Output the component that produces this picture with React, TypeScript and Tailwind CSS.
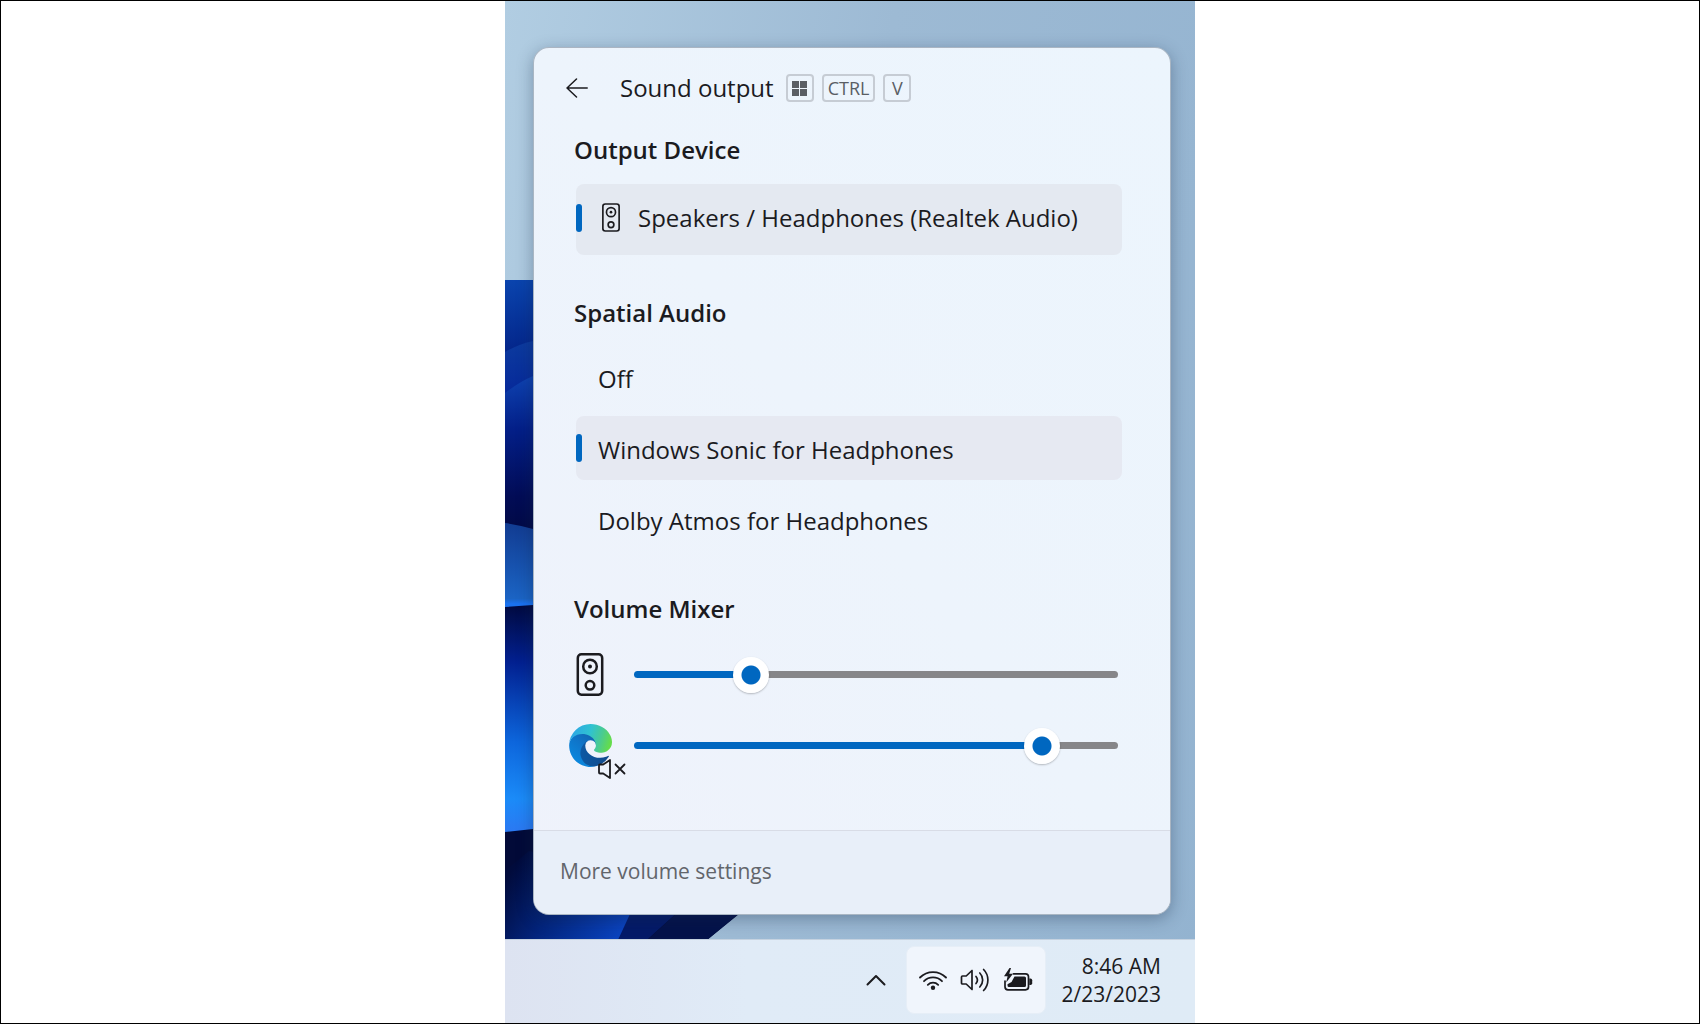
import { useState } from "react";

interface IconProps {
    className?: string;
}

interface VolumeSliderProps {
    label: string;
    value: number;
    onChange: (value: number) => void;
}

const spatialOptions = ["Off", "Windows Sonic for Headphones", "Dolby Atmos for Headphones"];

const THUMB_SIZE = 36;

const Wallpaper = () => (
    <svg
        className="absolute inset-0 w-full h-full"
        viewBox="0 0 690 1022"
        preserveAspectRatio="xMinYMax slice"
        aria-hidden="true"
    >
        <defs>
            <linearGradient id="petalTop" x1="0" y1="279" x2="0" y2="350" gradientUnits="userSpaceOnUse">
                <stop offset="0" stopColor="#0a44ae" />
                <stop offset="1" stopColor="#04268a" />
            </linearGradient>
            <linearGradient id="petalSecond" x1="0" y1="342" x2="0" y2="392" gradientUnits="userSpaceOnUse">
                <stop offset="0" stopColor="#0c3a9e" />
                <stop offset="1" stopColor="#06299a" />
            </linearGradient>
            <linearGradient id="petalDeep" x1="0" y1="376" x2="0" y2="525" gradientUnits="userSpaceOnUse">
                <stop offset="0" stopColor="#0e42b0" />
                <stop offset="0.35" stopColor="#031f88" />
                <stop offset="0.8" stopColor="#020c56" />
                <stop offset="1" stopColor="#020a48" />
            </linearGradient>
            <linearGradient id="petalMid" x1="0" y1="523" x2="0" y2="606" gradientUnits="userSpaceOnUse">
                <stop offset="0" stopColor="#123c92" />
                <stop offset="0.9" stopColor="#1b64c4" />
                <stop offset="0.96" stopColor="#1a72f0" />
                <stop offset="1" stopColor="#1a72f0" />
            </linearGradient>
            <linearGradient id="petalBright" x1="0" y1="604" x2="0" y2="832" gradientUnits="userSpaceOnUse">
                <stop offset="0" stopColor="#010a40" />
                <stop offset="0.25" stopColor="#022090" />
                <stop offset="0.6" stopColor="#0d66dc" />
                <stop offset="0.85" stopColor="#1b8bf8" />
                <stop offset="1" stopColor="#2c78f2" />
            </linearGradient>
            <linearGradient id="petalBase" x1="6" y1="870" x2="110" y2="938" gradientUnits="userSpaceOnUse">
                <stop offset="0" stopColor="#010b3c" />
                <stop offset="0.45" stopColor="#03247c" />
                <stop offset="1" stopColor="#0a42bc" />
            </linearGradient>
        </defs>
        <path d="M0 279h60V400H0z" fill="url(#petalTop)" />
        <path d="M0 351Q14 343 28 340L60 334V420H0z" fill="url(#petalSecond)" />
        <path d="M0 392Q14 381 28 375L60 364V540H0z" fill="url(#petalDeep)" />
        <path d="M0 522Q14 524 28 528L60 534V620H0z" fill="url(#petalMid)" />
        <path d="M0 606L28 604L60 602V840H0z" fill="url(#petalBright)" />
        <path d="M0 831L28 828L60 826L255 896L202 939H0z" fill="#020a38" />
        <path d="M0 870L24 850L150 880L113 939H0z" fill="url(#petalBase)" />
        <path d="M113 939L131 900H185L142 939z" fill="#041a68" />
        <path d="M142 939L180 905L243 905L202 939z" fill="#04124a" />
    </svg>
);

const BackIcon = ({ className }: IconProps) => (
    <svg className={className} viewBox="0 0 22 20" fill="none" stroke="currentColor" strokeWidth="1.5" strokeLinecap="round" strokeLinejoin="round" aria-hidden="true">
        <path d="M10.5 1L1 10l9.5 9M1 10h20.2" />
    </svg>
);

const WindowsIcon = ({ className }: IconProps) => (
    <svg className={className} viewBox="0 0 15 15" fill="currentColor" aria-hidden="true">
        <path d="M0 0h7v7H0zM8 0h7v7H8zM0 8h7v7H0zM8 8h7v7H8z" />
    </svg>
);

const SpeakerIcon = ({ className }: IconProps) => (
    <svg className={className} viewBox="0 0 27 43" fill="none" stroke="currentColor" strokeWidth="2.5" aria-hidden="true">
        <rect x="1.3" y="1.3" width="24.4" height="40.4" rx="3.6" />
        <circle cx="13.5" cy="13.5" r="6.8" />
        <circle cx="13.5" cy="13.5" r="2" fill="currentColor" stroke="none" />
        <circle cx="13.5" cy="32.3" r="4.3" />
    </svg>
);

const EdgeIcon = ({ className }: IconProps) => (
    <svg className={className} viewBox="0 0 256 256" aria-hidden="true">
        <defs>
            <linearGradient id="edgeBase" x1="63" y1="178" x2="241" y2="178" gradientUnits="userSpaceOnUse">
                <stop offset="0" stopColor="#0c59a4" />
                <stop offset="1" stopColor="#114a8b" />
            </linearGradient>
            <linearGradient id="edgeSwirl" x1="150" y1="95" x2="45" y2="220" gradientUnits="userSpaceOnUse">
                <stop offset="0" stopColor="#1268b4" />
                <stop offset="0.4" stopColor="#0f74c8" />
                <stop offset="1" stopColor="#0b86dc" />
            </linearGradient>
            <linearGradient id="edgeWave" x1="10" y1="60" x2="240" y2="130" gradientUnits="userSpaceOnUse">
                <stop offset="0" stopColor="#2ca6e6" />
                <stop offset="0.45" stopColor="#30c2d0" />
                <stop offset="0.75" stopColor="#4acb90" />
                <stop offset="1" stopColor="#64dc4c" />
            </linearGradient>
        </defs>
        <path
            fill="url(#edgeBase)"
            d="M231 190.5c-3.400 1.800-6.900 3.400-10.500 4.700a101.500 101.500 0 0 1-35.700 6.400c-47 0-88-32.400-88-73.900a31.200 31.200 0 0 1 16.400-27.300c-42.600 1.800-53.500 46.100-53.500 72.100 0 73.500 67.800 81 82.400 81 7.900 0 19.800-2.300 26.900-4.600l1.300-.4a128.300 128.300 0 0 0 66.600-52.800 4 4 0 0 0-5.900-5.200z"
        />
        <path
            fill="url(#edgeSwirl)"
            d="M105.700 241.400a79.200 79.200 0 0 1-22.700-21.300 80.700 80.700 0 0 1 30.200-119.800c3.200-1.500 8.500-4.100 15.600-4a32.400 32.400 0 0 1 25.700 13 31.900 31.900 0 0 1 6.300 18.700c0-.2 24.500-79.600-80-79.600C37 48.400 1 90 1 126.600c-.2 19.300 4 38.500 12.100 56a128 128 0 0 0 156.400 67.100 75.500 75.500 0 0 1-63.700-8.300z"
        />
        <path
            fill="url(#edgeWave)"
            d="M152.300 148.900c-.8 1-3.300 2.500-3.300 5.700 0 2.600 1.700 5.100 4.700 7.200 14.400 10 41.500 8.700 41.600 8.700 10.700 0 21.100-2.900 30.300-8.300A61.400 61.400 0 0 0 256 109.300c.3-22.400-8-37.300-11.300-43.900C223.500 23.900 177.700 0 128 0A128 128 0 0 0 0 126.200c.5-36.500 36.800-66 80-66 3.500 0 23.500.3 42 10.100 16.300 8.600 24.900 18.900 30.800 29.200 6.200 10.700 7.300 24.100 7.300 29.500 0 5.300-2.700 13.300-7.800 19.900z"
        />
    </svg>
);

const MutedIcon = ({ className }: IconProps) => (
    <svg className={className} viewBox="0 0 28 20" fill="none" stroke="#1b1b1f" strokeWidth="1.8" strokeLinecap="round" strokeLinejoin="round" aria-hidden="true">
        <path d="M1 6.500q0-1 1-1h3.200L12 1v18l-6.800-4.500H2q-1 0-1-1z" fill="#edf2fb" />
        <path d="M17.500 5.500l9 9M26.500 5.500l-9 9" />
    </svg>
);

const ChevronUpIcon = ({ className }: IconProps) => (
    <svg className={className} viewBox="0 0 20 12" fill="none" stroke="currentColor" strokeWidth="2" strokeLinecap="round" strokeLinejoin="round" aria-hidden="true">
        <path d="M1.500 10.500L10 2l8.500 8.500" />
    </svg>
);

const WifiIcon = ({ className }: IconProps) => (
    <svg className={className} viewBox="0 0 28 22" fill="none" stroke="currentColor" strokeWidth="1.8" strokeLinecap="round" aria-hidden="true">
        <path d="M1 8.500a18.200 18.200 0 0 1 26 0" />
        <path d="M5 12.200a12.700 12.700 0 0 1 18 0" />
        <path d="M8.800 15.800a7.400 7.400 0 0 1 10.400 0" />
        <circle cx="14" cy="18.800" r="2.200" fill="currentColor" stroke="none" />
    </svg>
);

const VolumeIcon = ({ className }: IconProps) => (
    <svg className={className} viewBox="0 0 30 24" fill="none" stroke="currentColor" strokeWidth="1.700" strokeLinecap="round" strokeLinejoin="round" aria-hidden="true">
        <path d="M1.500 9q0-1 1-1h3.700L12 2.500v19L6.200 16H2.500q-1 0-1-1z" />
        <path d="M16 8.500a5.500 5.500 0 0 1 0 7" />
        <path d="M19.800 5a10 10 0 0 1 0 14" />
        <path d="M23.600 1.500a15 15 0 0 1 0 21" />
    </svg>
);

const BatteryIcon = ({ className }: IconProps) => (
    <svg className={className} viewBox="0 0 30 24" fill="none" aria-hidden="true">
        <path
            d="M10.500 5.800H22.500q3 0 3 3v10q0 3-3 3H5q-3 0-3-3V13"
            stroke="currentColor"
            strokeWidth="1.700"
            strokeLinecap="round"
        />
        <path d="M11.500 8.500H21.500q1.500 0 1.500 1.500v7.500q0 1.500-1.500 1.500H6q-1.500 0-1.500-1.500v-1.200l4-2.300z" fill="currentColor" />
        <path d="M26.300 10.500h1.200q1.700 0 1.700 1.700v3q0 1.700-1.700 1.700h-1.200z" fill="currentColor" />
        <path d="M6.500 0L1 8.200h3.600L3.200 14.500L10 5.800H6.200L8 0z" fill="currentColor" />
    </svg>
);

const VolumeSlider = ({ label, value, onChange }: VolumeSliderProps) => {
    // the fill has to end under the centre of the thumb
    const fill = `calc(${THUMB_SIZE / 2}px + (100% - ${THUMB_SIZE}px) * ${value / 100})`;

    return (
        <input
            type="range"
            aria-label={label}
            min={0}
            max={100}
            value={value}
            onChange={(e) => onChange(Number(e.target.value))}
            className="flex-1 min-w-0 h-[7px] rounded-full appearance-none cursor-pointer [&::-webkit-slider-thumb]:appearance-none [&::-webkit-slider-thumb]:size-9 [&::-webkit-slider-thumb]:rounded-full [&::-webkit-slider-thumb]:bg-[radial-gradient(circle,#0067c0_9px,#ffffff_10px)] [&::-webkit-slider-thumb]:shadow-[0_1px_2px_rgba(0,0,0,0.25)]"
            style={{ background: `linear-gradient(to right, #0067c0 ${fill}, #868689 ${fill})` }}
        />
    );
};

export default function App() {
    const [spatial, setSpatial] = useState("Windows Sonic for Headphones");
    const [speakerVolume, setSpeakerVolume] = useState(22);
    const [edgeVolume, setEdgeVolume] = useState(87);

    return (
        <div className="min-h-screen flex justify-center bg-white border border-black font-['Open_Sans',sans-serif] text-[#1b1b1f]">
            <div className="relative w-full max-w-[690px] flex flex-col bg-[linear-gradient(100deg,#b1cde2_0%,#9dbad4_45%,#93b3d0_100%)]">
                <Wallpaper />

                <main className="relative flex-1 flex flex-col mt-[46px] ml-7 mr-6 mb-6 rounded-2xl border border-[#7d8c9c]/60 bg-[linear-gradient(to_bottom_left,#ecf5fd_0%,#edf4fc_50%,#eff2fb_100%)] shadow-[0_4px_16px_rgba(20,40,70,0.35)] overflow-hidden">
                    <header className="flex items-center pt-[26px] pl-8">
                        <button type="button" aria-label="Back">
                            <BackIcon className="w-[22px] h-5" />
                        </button>
                        <h1 className="ml-8 text-2xl leading-7">Sound output</h1>
                        <div className="ml-3 flex gap-2 text-lg leading-6 text-[#5a5e64]">
                            <kbd className="h-7 w-7 flex items-center justify-center rounded border-2 border-[#c6ccd4] font-[inherit]">
                                <WindowsIcon className="size-[15px]" />
                            </kbd>
                            <kbd className="h-7 px-1 flex items-center rounded border-2 border-[#c6ccd4] font-[inherit]">CTRL</kbd>
                            <kbd className="h-7 w-7 flex items-center justify-center rounded border-2 border-[#c6ccd4] font-[inherit]">V</kbd>
                        </div>
                    </header>

                    <section className="pt-8 pl-10 pr-12">
                        <h2 className="text-2xl leading-8 font-semibold">Output Device</h2>
                        <div className="mt-[18px] pl-[2px] flex">
                            <button
                                type="button"
                                className="flex-1 h-[71px] pb-1 flex items-center rounded-lg bg-[#e4e9f1] text-2xl text-left"
                            >
                                <span className="w-1.5 h-7 rounded-full bg-[#0067c0]" />
                                <SpeakerIcon className="ml-5 w-[18px] h-[29px]" />
                                <span className="ml-[18px]">Speakers / Headphones (Realtek Audio)</span>
                            </button>
                        </div>
                    </section>

                    <section className="pt-[42px] pl-10 pr-12">
                        <h2 id="spatial-heading" className="text-2xl leading-8 font-semibold">Spatial Audio</h2>
                        <div role="radiogroup" aria-labelledby="spatial-heading" className="mt-4 pl-[2px] flex flex-col gap-[7px]">
                            {spatialOptions.map((option) => (
                                <label
                                    key={option}
                                    className={`h-16 flex items-center rounded-lg text-2xl cursor-pointer ${option === spatial ? "bg-[#e6e9f2]" : ""}`}
                                >
                                    <input
                                        type="radio"
                                        name="spatial"
                                        className="sr-only"
                                        checked={option === spatial}
                                        onChange={() => setSpatial(option)}
                                    />
                                    <span className={`w-1.5 h-7 rounded-full ${option === spatial ? "bg-[#0067c0]" : ""}`} />
                                    <span className="ml-4 pt-1">{option}</span>
                                </label>
                            ))}
                        </div>
                    </section>

                    <section className="pt-[42px] pl-10 pr-[52px]">
                        <h2 className="text-2xl leading-8 font-semibold">Volume Mixer</h2>
                        <div className="mt-3.5 flex flex-col">
                            <div className="h-[71px] flex items-center gap-7">
                                <div className="w-8 flex justify-center">
                                    <SpeakerIcon className="w-7 h-[43px]" />
                                </div>
                                <VolumeSlider label="Speakers" value={speakerVolume} onChange={setSpeakerVolume} />
                            </div>
                            <div className="h-[71px] flex items-center gap-7">
                                <button type="button" aria-label="Unmute Microsoft Edge" className="relative w-8 flex justify-center">
                                    <EdgeIcon className="size-[43px] shrink-0" />
                                    <MutedIcon className="absolute -right-5 -bottom-3 w-7 h-5" />
                                </button>
                                <VolumeSlider label="Microsoft Edge" value={edgeVolume} onChange={setEdgeVolume} />
                            </div>
                        </div>
                    </section>

                    <footer className="mt-auto h-[84px] pb-1 flex items-center px-[26px] border-t border-[#d8dce6] bg-[#e8eff9]">
                        <a href="#settings" className="text-[21px] leading-7 text-[#62656b]">More volume settings</a>
                    </footer>
                </main>

                <div className="relative h-[84px] pb-1 flex items-center justify-end pr-[34px] border-t border-[#c5d2e0] bg-[linear-gradient(to_right,#dde3f1_0%,#e0ebf7_35%,#dfebf6_100%)]">
                    <button type="button" aria-label="Show hidden icons" className="mr-4 p-1">
                        <ChevronUpIcon className="w-5 h-3" />
                    </button>
                    <button
                        type="button"
                        aria-label="Network, volume and battery"
                        className="h-[68px] px-3 flex items-center gap-[13px] rounded-lg border border-[#e6eef7] bg-[#f0f5fc]"
                    >
                        <WifiIcon className="w-7 h-[22px]" />
                        <VolumeIcon className="w-[30px] h-6" />
                        <BatteryIcon className="w-[30px] h-6" />
                    </button>
                    <div className="ml-4 text-[21px] leading-7 text-right">
                        <div>8:46 AM</div>
                        <div>2/23/2023</div>
                    </div>
                </div>
            </div>
        </div>
    );
}
